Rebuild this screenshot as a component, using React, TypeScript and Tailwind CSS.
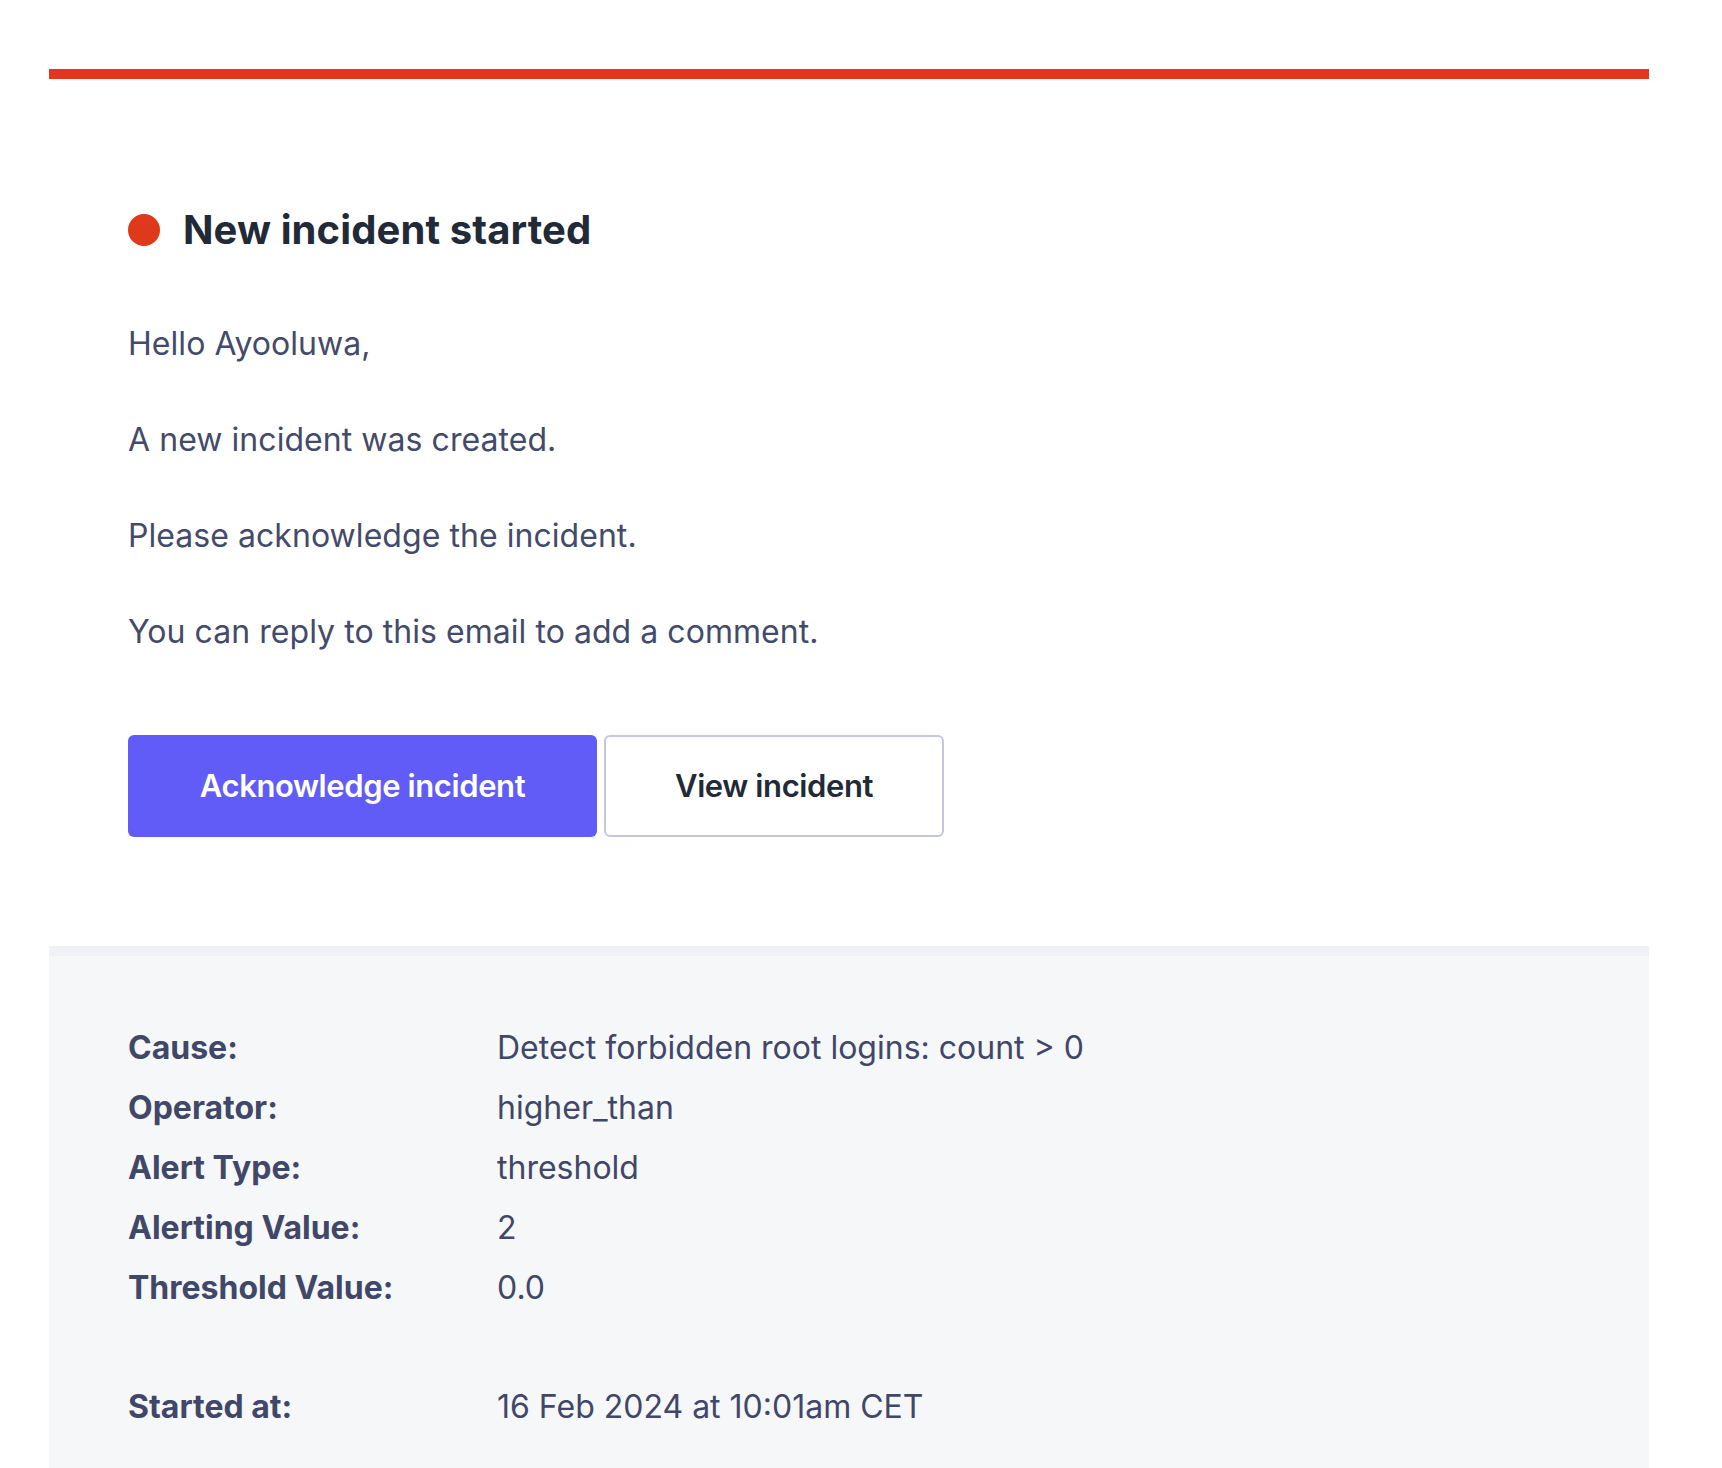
import React from "react";

const rows: [string, string][] = [
  ["Cause:", "Detect forbidden root logins: count > 0"],
  ["Operator:", "higher_than"],
  ["Alert Type:", "threshold"],
  ["Alerting Value:", "2"],
  ["Threshold Value:", "0.0"],
];

export default function App() {
  return (
    <div className="min-h-[1468px] bg-white pl-[49px] pt-[69px] font-['Inter','Noto_Sans',sans-serif]">
      <div className="w-[1600px]">
        <div className="h-[10px] bg-[#e0381b]" />
        <div className="px-[79px] pt-[127px] pb-[109px]">
          <div className="flex items-center gap-[23px] h-[48px]">
            <div className="w-[32px] h-[32px] rounded-full bg-[#e0381b] shrink-0" />
            <h1 className="text-[40px] leading-[48px] font-bold text-[#222a37] tracking-[0.1px]">New incident started</h1>
          </div>
          <div className="mt-[66px] flex flex-col gap-[48px] text-[32px] leading-[48px] text-[#444a6a] tracking-[0.05px]">
            <p>Hello Ayooluwa,</p>
            <p>A new incident was created.</p>
            <p>Please acknowledge the incident.</p>
            <p>You can reply to this email to add a comment.</p>
          </div>
          <div className="mt-[79px] flex gap-[7px]">
            <a className="w-[469px] h-[102px] flex items-center justify-center rounded-[6px] bg-[#615cf7] text-white text-[31px] font-semibold tracking-[-0.4px]">
              Acknowledge incident
            </a>
            <a className="w-[340px] h-[102px] flex items-center justify-center rounded-[6px] border-2 border-[#c5c8dc] bg-white text-[#222a37] text-[31px] font-semibold tracking-[-0.4px]">
              View incident
            </a>
          </div>
        </div>
        <div className="border-t-[10px] border-[#eff1f6] bg-[#f6f7f9] px-[79px] pt-[62px] pb-[80px]">
          {rows.map(([k, v]) => (
            <div key={k} className="flex h-[60px] items-center text-[32px] leading-[60px] text-[#414768]">
              <div className="w-[369px] shrink-0 font-bold">{k}</div>
              <div>{v}</div>
            </div>
          ))}
          <div className="h-[59px]" />
          <div className="flex h-[60px] items-center text-[32px] leading-[60px] text-[#414768]">
            <div className="w-[369px] shrink-0 font-bold">Started at:</div>
            <div>16 Feb 2024 at 10:01am CET</div>
          </div>
        </div>
      </div>
    </div>
  );
}
